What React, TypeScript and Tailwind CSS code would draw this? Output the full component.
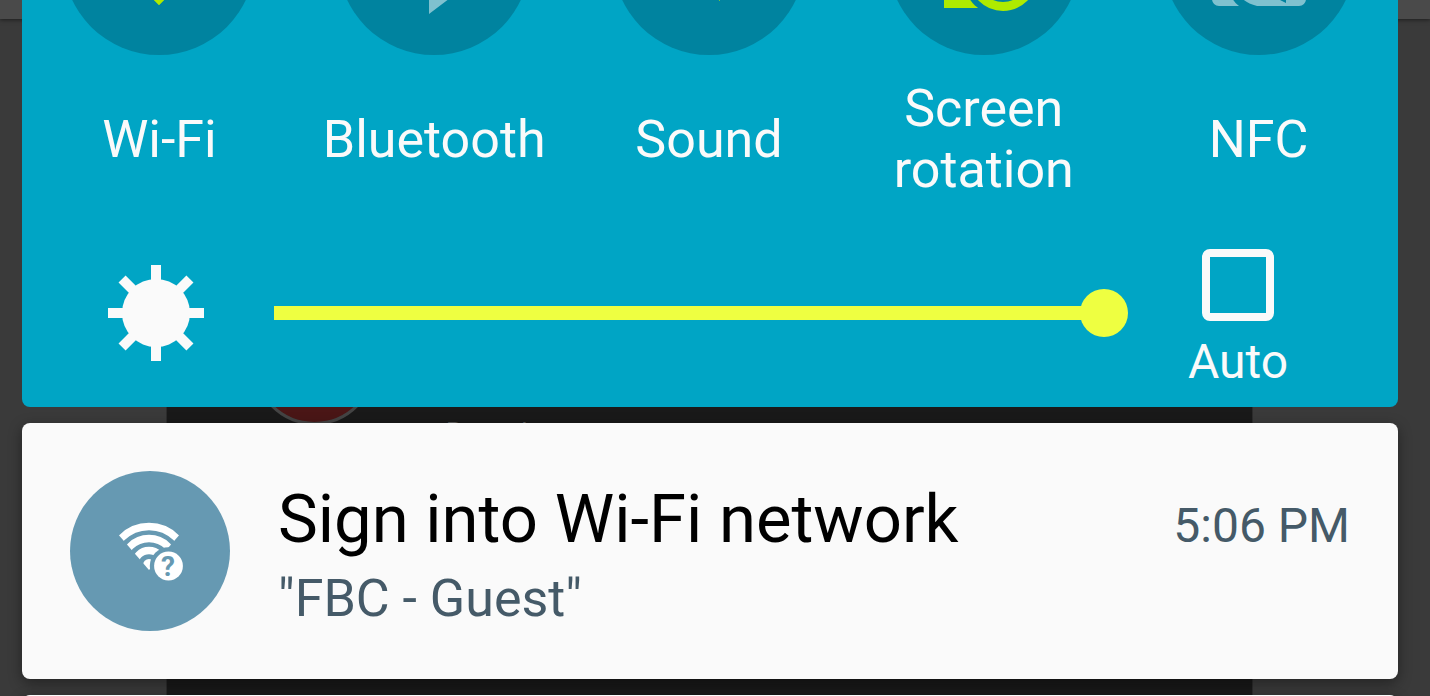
import { useState } from "react";
import type { ReactNode } from "react";

function WifiGlyph() {
  return (
    <svg viewBox="0 0 192 192" className="size-full" aria-hidden="true">
      <clipPath id="wifi-wedge">
        <path d="M96 142 36 82V40h120v42z" />
      </clipPath>
      <g clipPath="url(#wifi-wedge)" fill="none" stroke="#aeea00" strokeWidth="11">
        <circle cx="96" cy="136" r="62" />
        <circle cx="96" cy="136" r="43" />
        <circle cx="96" cy="136" r="24" />
        <circle cx="96" cy="136" r="8" fill="#aeea00" stroke="none" />
      </g>
      <path d="M85 131h22l-11 11z" fill="#aeea00" />
    </svg>
  );
}

function BluetoothGlyph() {
  return (
    <svg viewBox="0 0 192 192" className="size-full" aria-hidden="true">
      <path
        fillRule="evenodd"
        fill="#7fc1cf"
        d="M91 41 128 69 102 96 128 123 91 151V109L69 130 61 122 87 96 61 70 69 62 91 83ZM101 61V83L113 70ZM101 109V126L113 122Z"
      />
    </svg>
  );
}

function SoundGlyph() {
  return (
    <svg viewBox="0 0 192 192" className="size-full" aria-hidden="true">
      <path d="M52 80h22l33-27v85L74 112H52z" fill="#aeea00" />
      <path
        d="M118 78a26 26 0 0 1 0 36M130 65a44 44 0 0 1 0 62"
        fill="none"
        stroke="#aeea00"
        strokeWidth="8"
      />
    </svg>
  );
}

function RotationGlyph() {
  return (
    <svg viewBox="0 0 192 192" className="size-full" aria-hidden="true">
      <mask id="rotation-gap">
        <path d="M0 0h192v192H0z" fill="#fff" />
        <circle cx="115" cy="114" r="40" fill="#000" />
      </mask>
      <path d="M56 46h60v99H56z" fill="#aeea00" mask="url(#rotation-gap)" />
      <circle cx="115" cy="114" r="29.5" fill="none" stroke="#aeea00" strokeWidth="9" />
    </svg>
  );
}

function NfcGlyph() {
  return (
    <svg viewBox="0 0 192 192" className="size-full" aria-hidden="true">
      <path
        fill="#7fc1cf"
        d="M56 49H70C66 54 65 60 65 70V116C65 128 68 137 76 143H56a7 7 0 0 1-7-7V56a7 7 0 0 1 7-7Z"
      />
      <path
        fill="#7fc1cf"
        d="M72 65V116C72 128 77 139 94 143H136a7 7 0 0 0 7-7V56a7 7 0 0 0-7-7H123V140L117 137Z"
      />
    </svg>
  );
}

function SunGlyph() {
  return (
    <svg viewBox="0 0 96 96" className="mt-4 size-24 shrink-0" aria-hidden="true">
      <circle cx="48" cy="48" r="34" fill="#fafafa" />
      <g stroke="#fafafa" strokeWidth="10">
        <path d="M48 0v96M0 48h96" />
        <path d="M48 0v96M0 48h96" transform="rotate(45 48 48)" />
      </g>
    </svg>
  );
}

function WifiHelpGlyph() {
  return (
    <svg viewBox="0 0 160 160" className="size-full" aria-hidden="true">
      <clipPath id="signal-wedge">
        <path d="M79 99 34 47V20h90v27z" />
      </clipPath>
      <mask id="signal-gap">
        <path d="M0 0h160v160H0z" fill="#fff" />
        <circle cx="98.5" cy="95" r="18.7" fill="#000" />
      </mask>
      <g mask="url(#signal-gap)">
        <g clipPath="url(#signal-wedge)" fill="none" stroke="#fff" strokeWidth="7.3">
          <circle cx="79" cy="94" r="38.5" />
          <circle cx="79" cy="94" r="26.5" />
          <circle cx="79" cy="94" r="14.5" />
          <circle cx="79" cy="94" r="6" fill="#fff" stroke="none" />
        </g>
      </g>
      <circle cx="98.5" cy="95" r="14.4" fill="#fff" />
      <text x="98" y="105" textAnchor="middle" fontSize="28" fontWeight="700" fill="#6699b2">
        ?
      </text>
    </svg>
  );
}

function Toggle({ label, on, children }: { label: string; on: boolean; children: ReactNode }) {
  const [active, setActive] = useState(on);
  return (
    <button
      type="button"
      aria-pressed={active}
      onClick={() => setActive(!active)}
      className="flex min-w-0 flex-col items-center gap-[23px]"
    >
      <span className="size-48 rounded-full bg-[#00839f]">{children}</span>
      <span className="flex h-[122px] items-center text-center text-[52px] leading-[61px]">
        {label}
      </span>
    </button>
  );
}

function Backdrop() {
  return (
    <div className="absolute inset-0 flex flex-col bg-[#3a3a3a]" aria-hidden="true">
      <div className="h-[19px] shrink-0 bg-[#4a4a4a] shadow-[0_1px_4px_rgba(0,0,0,0.5)]" />
      <div className="mr-[177px] ml-[166px] flex grow items-start gap-[70px] border-x border-[#2c2c2c] bg-[#191919] pt-[283px] pl-[86px]">
        <span className="size-[123px] rounded-full border-[3px] border-[#444] bg-[#4a1616]" />
        <span className="pt-[114px] text-[26px] leading-8 text-[#5a5a5a]">Record</span>
      </div>
    </div>
  );
}

export default function App() {
  const [brightness, setBrightness] = useState(100);
  const [auto, setAuto] = useState(false);

  return (
    <div className="relative h-screen overflow-hidden font-[Roboto,sans-serif]">
      <Backdrop />
      <main className="relative -mt-[137px] flex flex-col gap-4 pr-8 pl-[22px]">
        <section
          aria-label="Quick settings"
          className="rounded-lg bg-[#00a5c5] pb-[18px] text-[#fafafa]"
        >
          <div className="grid grid-cols-5 pr-0.5">
            <Toggle label="Wi-Fi" on>
              <WifiGlyph />
            </Toggle>
            <Toggle label="Bluetooth" on={false}>
              <BluetoothGlyph />
            </Toggle>
            <Toggle label="Sound" on>
              <SoundGlyph />
            </Toggle>
            <Toggle label="Screen rotation" on>
              <RotationGlyph />
            </Toggle>
            <Toggle label="NFC" on={false}>
              <NfcGlyph />
            </Toggle>
          </div>
          <div className="mt-[49px] flex items-start pr-[108px] pl-[86px]">
            <SunGlyph />
            <input
              type="range"
              aria-label="Brightness"
              min={0}
              max={100}
              value={brightness}
              onChange={(e) => setBrightness(Number(e.target.value))}
              className="mt-10 mr-[58px] ml-[70px] h-12 min-w-0 flex-1 appearance-none bg-transparent [&::-webkit-slider-runnable-track]:h-[14px] [&::-webkit-slider-runnable-track]:bg-[linear-gradient(to_right,#eeff41_calc(100%-24px),transparent_0)] [&::-webkit-slider-thumb]:-mt-[17px] [&::-webkit-slider-thumb]:size-12 [&::-webkit-slider-thumb]:appearance-none [&::-webkit-slider-thumb]:rounded-full [&::-webkit-slider-thumb]:bg-[#eeff41]"
            />
            <label className="flex w-[104px] shrink-0 flex-col items-center gap-3 text-[48px] leading-[58px]">
              <input
                type="checkbox"
                checked={auto}
                onChange={(e) => setAuto(e.target.checked)}
                className="size-[72px] appearance-none rounded-lg border-8 border-[#fafafa] checked:bg-[#eeff41]"
              />
              <span className="-mb-0.5">Auto</span>
            </label>
          </div>
        </section>

        <article className="flex items-start gap-12 rounded-lg bg-[#fafafa] p-12 shadow-[0_4px_14px_rgba(0,0,0,0.4)]">
          <div className="size-40 shrink-0 rounded-full bg-[#6699b2]">
            <WifiHelpGlyph />
          </div>
          <div className="min-w-0 flex-1 pt-2">
            <div className="flex items-baseline justify-between">
              <h2 className="text-[67px] leading-[80px] whitespace-nowrap text-black">
                Sign into Wi-Fi network
              </h2>
              <time className="text-[48px] leading-[56px] whitespace-nowrap text-[#455a68]">
                5:06 PM
              </time>
            </div>
            <p className="mt-[9px] text-[52px] leading-[61px] text-[#455a68]">"FBC - Guest"</p>
          </div>
        </article>

        <div className="h-64 rounded-lg bg-[#fafafa] shadow-[0_4px_14px_rgba(0,0,0,0.4)]" />
      </main>
    </div>
  );
}
